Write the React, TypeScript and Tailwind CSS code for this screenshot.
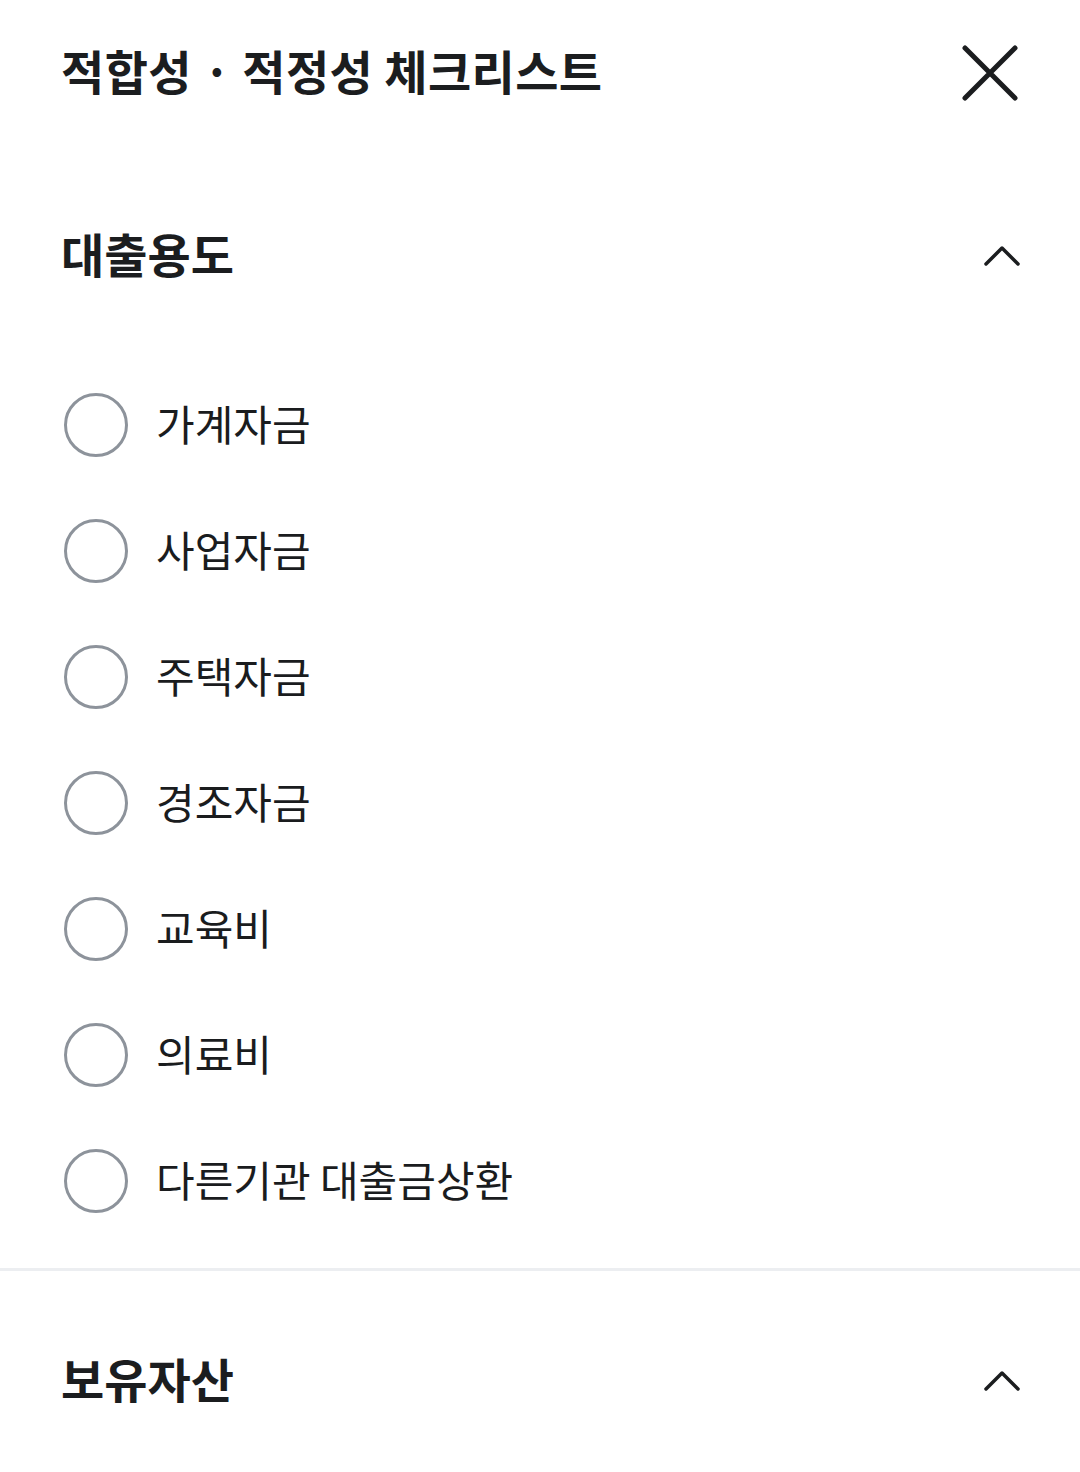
import React from "react";

const purposes = [
  "가계자금",
  "사업자금",
  "주택자금",
  "경조자금",
  "교육비",
  "의료비",
  "다른기관 대출금상환",
];

const font = { fontFamily: '"Noto Sans CJK KR", "Noto Sans", sans-serif' };

function ChevronUp() {
  return (
    <svg width="38" height="24" viewBox="0 0 38 24" fill="none" aria-hidden="true">
      <path d="M3 21 L19 5 L35 21" stroke="#1b1d1f" strokeWidth="3.5" strokeLinecap="round" strokeLinejoin="round" />
    </svg>
  );
}

function SectionHeader({ title }: { title: string }) {
  return (
    <div className="flex h-[126px] items-center justify-between pl-[61px] pr-[59px]">
      <h2 className="pb-[4px] text-[47px] font-bold text-[#1b1d1f]">{title}</h2>
      <ChevronUp />
    </div>
  );
}

export default function App() {
  return (
    <div className="min-h-[1472px] w-[1080px] bg-white" style={font}>
      <header className="flex h-[146px] items-center justify-between pl-[61px] pr-[60px]">
        <h1 className="pb-[6px] text-[47px] font-bold tracking-[0.4px] text-[#1b1d1f]">
          적합성 · 적정성 체크리스트
        </h1>
        <button type="button" aria-label="닫기">
          <svg width="60" height="60" viewBox="0 0 60 60" fill="none">
            <path d="M5 5 L55 55 M55 5 L5 55" stroke="#1b1d1f" strokeWidth="5" strokeLinecap="round" />
          </svg>
        </button>
      </header>

      <section className="mt-[46px]">
        <SectionHeader title="대출용도" />
        <ul className="mt-[44px]">
          {purposes.map((p) => (
            <li key={p} className="flex h-[126px] items-center gap-[28px] pl-[64px]">
              <span className="h-[64px] w-[64px] shrink-0 rounded-full border-[3px] border-[#8d939b]" />
              <span className="pb-[6px] text-[42px] text-[#1a1c1e]">{p}</span>
            </li>
          ))}
        </ul>
      </section>

      <div className="mt-[24px] h-[3px] w-full bg-[#eceef1]" />

      <section className="mt-[46px]">
        <SectionHeader title="보유자산" />
      </section>
    </div>
  );
}
